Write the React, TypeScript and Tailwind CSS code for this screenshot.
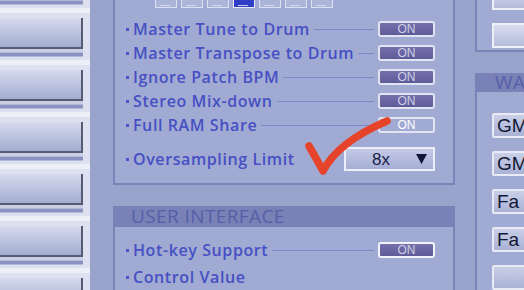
import React from "react";

const settings = [
  { label: "Master Tune to Drum", on: true },
  { label: "Master Transpose to Drum", on: true },
  { label: "Ignore Patch BPM", on: true },
  { label: "Stereo Mix-down", on: true },
  { label: "Full RAM Share", on: false },
];

const labelFont = { fontFamily: '"Open Sans", "Noto Sans", sans-serif' };
const plainFont = { fontFamily: '"Liberation Sans", Arial, sans-serif' };

function SideButton() {
  return (
    <div className="h-[52px] w-[90px] shrink-0 bg-[#dde0ef] pt-[5px] border-t-[5px] border-[#eef0f8]">
      <div className="w-[83px] h-[31px] bg-gradient-to-b from-[#d5daec] to-[#a5add2] border-r-2 border-b-2 border-[#565b74]" />
      <div className="w-[83px] h-[3px] bg-[#c9cee3]" />
      <div className="w-[83px] h-[5px] bg-[#8a92c1] border-y border-[#b3b9d9]" />
    </div>
  );
}

function OnButton({ filled = true, strong = false }: { filled?: boolean; strong?: boolean }) {
  return (
    <div
      className={`w-[57px] h-[16px] rounded-[3px] flex items-center justify-center text-[12px] leading-none ${
        filled ? "bg-gradient-to-b from-[#7570ab] to-[#5f5b98] text-[#cdd0e6]" : "text-white"
      } ${strong ? "border-2 border-[#f2f3fa]" : "border-2 border-[#e2e4f1]"}`}
      style={plainFont}
    >
      ON
    </div>
  );
}

function Row({ label, children, line = true }: { label: string; children: React.ReactNode; line?: boolean }) {
  return (
    <div className="h-[24px] flex items-center pl-[11px] pr-[18px]">
      <span className="w-[3px] h-[3px] bg-[#4a54c6] mr-[4px] shrink-0" />
      <span
        className="text-[16px] font-semibold tracking-[0.6px] text-[#4650c4] whitespace-nowrap leading-none"
        style={labelFont}
      >
        {label}
      </span>
      <div className={`flex-1 mx-[4px] h-px ${line ? "bg-[#7f88cb]" : ""}`} />
      {children}
    </div>
  );
}

function TabIcons() {
  return (
    <div className="flex gap-[4px] ml-[40px] h-[8px]">
      {[0, 1, 2, 3, 4, 5, 6].map((i) => (
        <div
          key={i}
          className={`w-[22px] h-[8px] border border-t-0 ${
            i === 3 ? "bg-[#2f3ec4] border-[#e9ebf7]" : "bg-[#adb4d9] border-[#dde0f0]"
          } flex items-end px-[4px] pb-[1px]`}
        >
          <div className={`h-px w-[10px] ${i === 3 ? "bg-[#c8cff5]" : "bg-[#d3d7ec]"}`} />
        </div>
      ))}
    </div>
  );
}

function WaveButton({ text }: { text?: string }) {
  return (
    <div
      className="h-[25px] w-[40px] border-2 border-[#e8eaf5] rounded-[2px] bg-gradient-to-b from-[#c9cfe7] to-[#aab2d6] flex items-center pl-[3px] text-[19px] text-[#121735] leading-none"
      style={plainFont}
    >
      {text}
    </div>
  );
}

export default function App() {
  return (
    <div className="relative w-[524px] h-[290px] overflow-hidden bg-[#99a3cc] flex">
      {/* left button column */}
      <div className="w-[92px] shrink-0 flex flex-col mt-[-44px]">
        {[0, 1, 2, 3, 4, 5, 6].map((i) => (
          <SideButton key={i} />
        ))}
      </div>

      {/* middle settings */}
      <div className="ml-[21px] w-[342px] shrink-0 flex flex-col">
        <div className="h-[185px] border-x-2 border-b-2 border-[#7a84b9] bg-[#a1aad2]">
          <TabIcons />
          <div className="mt-[9px]">
            {settings.map((s) => (
              <Row key={s.label} label={s.label}>
                <OnButton filled={s.on} />
              </Row>
            ))}
          </div>
          <div className="mt-[10px]">
            <Row label="Oversampling Limit" line={false}>
              <div
                className="w-[91px] h-[24px] border-2 border-[#eceef7] bg-gradient-to-b from-[#c4cae5] to-[#a6aed5] flex items-center pl-[26px] pr-[6px]"
                style={plainFont}
              >
                <span className="text-[17px] text-[#1a1f4a] leading-none">8x</span>
                <svg className="ml-auto" width="11" height="10" viewBox="0 0 11 10">
                  <polygon points="0,0 11,0 5.5,10" fill="#12173a" />
                </svg>
              </div>
            </Row>
          </div>
        </div>

        <div className="mt-[21px] h-[21px] bg-[#7a81b6] pl-[18px] flex items-center">
          <span className="text-[19px] font-medium tracking-[0.4px] text-[#5560a8] leading-none" style={labelFont}>
            USER INTERFACE
          </span>
        </div>
        <div className="flex-1 border-x-2 border-[#7a84b9] bg-[#a1aad2] pt-[11px]">
          <Row label="Hot-key Support">
            <OnButton strong />
          </Row>
          <div className="mt-[3px]">
            <Row label="Control Value" line={false}>
              <span />
            </Row>
          </div>
        </div>
      </div>

      {/* right column */}
      <div className="ml-[20px] flex-1 flex flex-col">
        <div className="h-[62px] border-l-2 border-b-2 border-[#7a84b9] bg-[#a1aad2] pl-[15px] flex flex-col gap-[13px]">
          <div className="mt-[-15px]">
            <div className="h-[25px] w-[40px] border-2 border-[#eef0f8] bg-gradient-to-b from-[#d8dcee] to-[#b4bcdb]" />
          </div>
          <div className="h-[25px] w-[40px] border-2 border-[#eef0f8] bg-gradient-to-b from-[#d8dcee] to-[#b4bcdb]" />
        </div>
        <div className="mt-[21px] h-[20px] bg-[#7a81b6] pl-[20px] flex items-center">
          <span className="text-[19px] font-medium tracking-[0.4px] text-[#5560a8] leading-none" style={labelFont}>
            WA
          </span>
        </div>
        <div className="flex-1 border-l-2 border-[#7a84b9] bg-[#a1aad2] pl-[15px] pt-[21px] flex flex-col gap-[13px]">
          <WaveButton text="GM" />
          <WaveButton text="GM" />
          <WaveButton text="Fa" />
          <WaveButton text="Fa" />
          <WaveButton />
        </div>
      </div>

      {/* hand-drawn red check mark over the panel */}
      <svg className="absolute left-0 top-0 pointer-events-none" width="524" height="290" viewBox="0 0 524 290">
        <path
          d="M309 146 Q316 158 323 171 Q338 142 387 121"
          fill="none"
          stroke="#e6432b"
          strokeWidth="7.5"
          strokeLinecap="round"
          strokeLinejoin="round"
        />
      </svg>
    </div>
  );
}
